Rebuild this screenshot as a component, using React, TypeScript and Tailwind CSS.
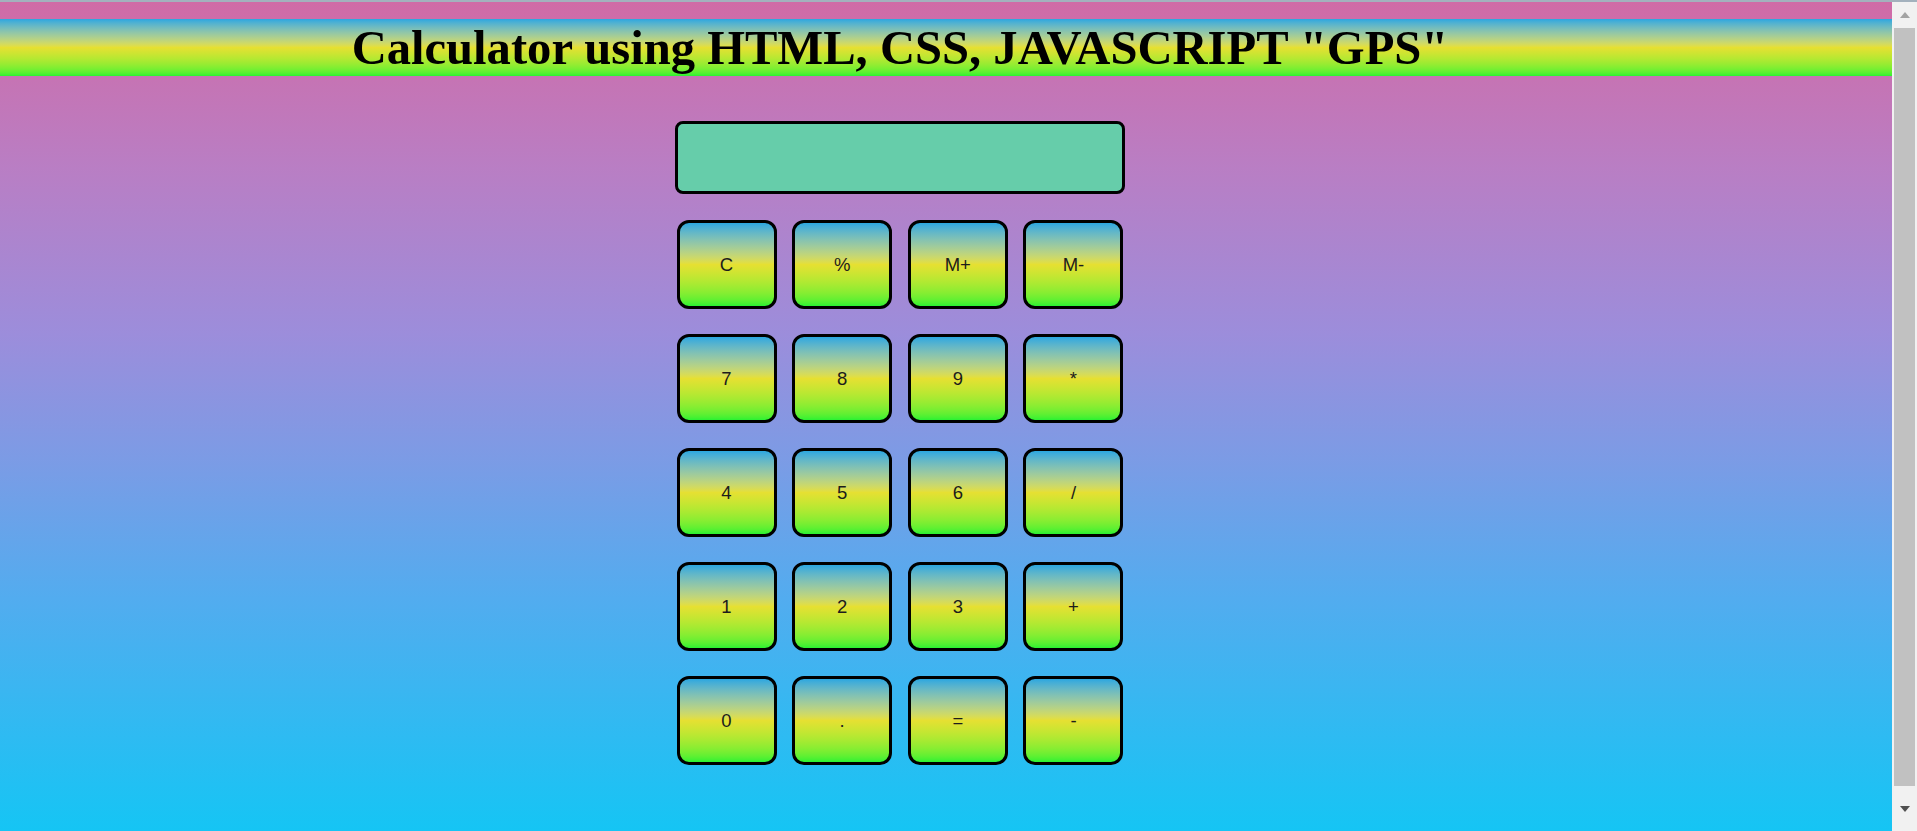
import React from 'react';

const keys = [
  ['C', '%', 'M+', 'M-'],
  ['7', '8', '9', '*'],
  ['4', '5', '6', '/'],
  ['1', '2', '3', '+'],
  ['0', '.', '=', '-'],
];

export default function App() {
  return (
    <div className="h-[831px] overflow-hidden flex flex-col font-['Liberation_Sans',Arial,sans-serif]">
      {/* thin strip at the very top */}
      <div className="h-[2px] shrink-0 bg-[#a3b1bd]" />

      <div className="flex-1 flex min-h-0">
        <main className="flex-1 min-w-0 bg-[linear-gradient(to_bottom,#d06ba6_0%,#b97ec4_20%,#9c8ddb_40%,#7c9be5_55%,#52acef_72%,#15c5f4_100%)]">
          {/* Title band */}
          <header className="mt-[17px] h-[57px] bg-linear-to-b from-[#2aa7e0] via-[#e6e032] to-[#26f232]">
            <div className="w-[1800px] text-center pt-[2px]">
              <h1 className="font-['Liberation_Serif','Times_New_Roman',serif] font-bold text-[48.6px] leading-[55px] text-black whitespace-nowrap">
                Calculator using HTML, CSS, JAVASCRIPT "GPS"
              </h1>
            </div>
          </header>

          {/* Calculator */}
          <div className="w-[1800px] pt-[45px]">
            <div className="w-[450px] mx-auto">
              <div className="h-[73px] rounded-[8px] border-[3px] border-black bg-[#66cdaa]" />

              <div className="mt-[26px] mx-auto w-[447px] flex flex-col gap-[25px]">
                {keys.map((row, r) => (
                  <div key={r} className="flex justify-between">
                    {row.map((k) => (
                      <button
                        key={k}
                        className="w-[100px] h-[89px] rounded-[12px] border-[3px] border-black bg-linear-to-b from-[#2aa7e0] via-[#e6e032] to-[#26f232] text-[18.5px] text-[#1c1c1c] flex items-center justify-center"
                      >
                        {k}
                      </button>
                    ))}
                  </div>
                ))}
              </div>
            </div>
          </div>
        </main>

        {/* Scrollbar */}
        <div className="w-[25px] shrink-0 bg-[#f1f1f1] flex flex-col items-center">
          <div className="h-[26px] w-full flex items-center justify-center">
            <svg width="10" height="6" viewBox="0 0 10 6">
              <path d="M0 6 L5 0 L10 6 Z" fill="#a3a3a3" />
            </svg>
          </div>
          <div className="h-[758px] w-[21px] bg-[#c1c1c1]" />
          <div className="flex-1 w-full flex items-center justify-center">
            <svg width="10" height="6" viewBox="0 0 10 6">
              <path d="M0 0 L10 0 L5 6 Z" fill="#505050" />
            </svg>
          </div>
        </div>
      </div>
    </div>
  );
}
